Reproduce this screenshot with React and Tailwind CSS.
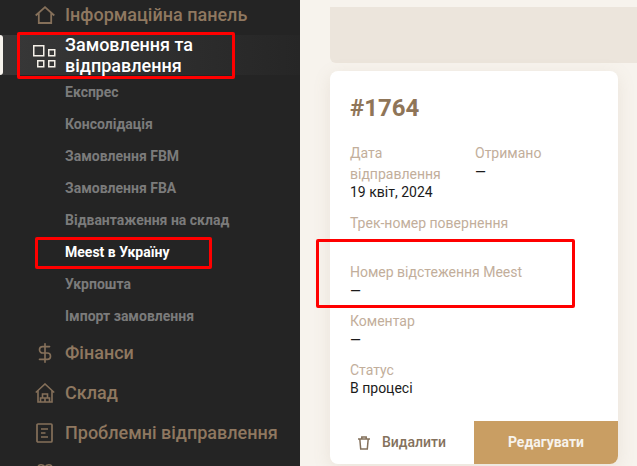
import React from "react";
import { DollarSign } from "lucide-react";

const subItems = [
  "Експрес",
  "Консолідація",
  "Замовлення FBM",
  "Замовлення FBA",
  "Відвантаження на склад",
  "Meest в Україну",
  "Укрпошта",
  "Імпорт замовлення",
];

const HomeIcon = () => (
  <svg width="20" height="18" viewBox="0 0 20 18" fill="none" stroke="#85705a" strokeWidth="1.8">
    <path d="M.7 9.500 10 1.200l9.300 8.300M3.800 7v10h12.400V7" />
  </svg>
);

const GridIcon = () => (
  <svg width="24" height="24" viewBox="0 0 24 24" fill="none" stroke="#f5f0e8" strokeWidth="1.5">
    <rect x="1.750" y="1.750" width="10" height="10" />
    <rect x="16.750" y="5.750" width="6" height="6" />
    <rect x="5.750" y="16.750" width="6" height="6" />
    <rect x="16.750" y="16.750" width="6" height="6" />
  </svg>
);

const StoreIcon = () => (
  <svg width="20" height="20" viewBox="0 0 20 20" fill="none" stroke="#85705a" strokeWidth="1.6">
    <path d="M.8 9.500 10 1l9.200 8.500M3 7.500V19h14V7.500" />
    <path d="M5.500 19v-4h9v4M10 19v-4M7.500 15v-4h5v4" />
  </svg>
);

const DocIcon = () => (
  <svg width="17" height="20" viewBox="0 0 17 20" fill="none" stroke="#85705a" strokeWidth="1.7">
    <rect x="1" y="1" width="15" height="18" rx="1" />
    <path d="M5 6h7M5 10h4.500M5 14h7" />
  </svg>
);

const HeartIcon = () => (
  <svg width="16" height="20" viewBox="0 0 16 20" fill="none" stroke="#85705a" strokeWidth="1.6">
    <path d="M8 4.500C7 1.500 1 .2 1 5c0 4 4 7 7 10 3-3 7-6 7-10 0-4.800-6-3.500-7-.500Z" />
  </svg>
);

const TrashIcon = () => (
  <svg width="12" height="14" viewBox="0 0 12 14" fill="none" stroke="#84715c" strokeWidth="1.5">
    <path d="M0 3h12M3.800 3V1h4.400v2M1.800 3l.9 10h6.600l.9-10" />
  </svg>
);

const NavRow = ({ icon, label }) => (
  <div className="flex h-10 shrink-0 items-center pl-[33px]">
    <div className="mr-[9px] flex w-[23px] shrink-0 justify-center">{icon}</div>
    {label && (
      <span className="-mt-[2px] whitespace-nowrap text-[18px] font-medium text-[#8f7860]">{label}</span>
    )}
  </div>
);

const Field = ({ label, value }) => (
  <div>
    <div className="text-[14px] leading-[21px] text-[#c2ae9b]">{label}</div>
    <div className={`-mt-px h-4 text-[14px] leading-4 text-[#1b1b1b] ${value === "—" ? "pt-px" : ""}`}>{value}</div>
  </div>
);

export default function App() {
  return (
    <div className="relative flex h-[466px] w-[637px] overflow-hidden bg-[#f7f3ed] font-['Roboto',sans-serif]">
      {/* sidebar */}
      <aside className="-mt-[5px] flex w-[300px] shrink-0 flex-col bg-[#242424]">
        <NavRow icon={<HomeIcon />} label="Інформаційна панель" />

        <div className="relative flex h-10 shrink-0 items-center bg-gradient-to-r from-[#383838] to-[#262626]">
          <div className="absolute left-0 top-0 h-full w-[3px] rounded-r-sm bg-[#f7f3ed]" />
          <div className="ml-[32px] mr-[9px] mt-[1px] shrink-0">
            <GridIcon />
          </div>
          <span className="text-[18px] font-medium leading-[21px] text-white">
            Замовлення та
            <br />
            відправлення
          </span>
        </div>

        <div className="mt-px flex shrink-0 flex-col">
          {subItems.map((item) => (
            <div
              key={item}
              className={`flex h-8 items-center pl-[65px] text-[14px] font-bold ${
                item === "Meest в Україну" ? "text-white" : "text-[#7b7b7b]"
              }`}
            >
              {item}
            </div>
          ))}
        </div>

        <div className="mt-px shrink-0">
          <NavRow icon={<DollarSign size={22} color="#85705a" strokeWidth={1.8} />} label="Фінанси" />
          <NavRow icon={<StoreIcon />} label="Склад" />
          <NavRow icon={<DocIcon />} label="Проблемні відправлення" />
          <NavRow icon={<HeartIcon />} />
        </div>
      </aside>

      {/* main */}
      <main className="flex min-w-0 flex-1 flex-col pl-[30px] pt-[7px]">
        <div className="h-14 shrink-0 rounded-bl-md bg-[#ece5dc]" />

        <section className="mr-[19px] mt-2 flex h-[393px] flex-col rounded-lg bg-white shadow-[0_4px_18px_rgba(143,120,96,0.13)]">
          <div className="px-5 pt-[21px]">
            <h1 className="mb-[19px] text-[24px] font-bold leading-8 text-[#8f7558]">#1764</h1>
            <div className="flex flex-col gap-[13px]">
              <div className="grid grid-cols-[125px_1fr]">
                <Field label={<>Дата<br />відправлення</>} value="19 квіт, 2024" />
                <Field label="Отримано" value="—" />
              </div>
              <Field label="Трек-номер повернення" value="" />
              <Field label="Номер відстеження Meest" value="—" />
              <Field label="Коментар" value="—" />
              <Field label="Статус" value="В процесі" />
            </div>
          </div>

          <div className="mt-auto flex h-[43px] overflow-hidden rounded-b-lg">
            <div className="flex flex-1 items-center gap-3 pl-[28px]">
              <TrashIcon />
              <span className="text-[14px] font-medium text-[#84715c]">Видалити</span>
            </div>
            <div className="flex w-[144px] items-center justify-center bg-[#c99e63] text-[14px] font-bold text-[#f7f3ed]">
              Редагувати
            </div>
          </div>
        </section>
      </main>

      {/* red annotation boxes */}
      <div className="absolute left-[17px] top-[32px] h-[47px] w-[218px] rounded-[2px] border-[3px] border-[#ff0000]" />
      <div className="absolute left-[35px] top-[237px] h-[32px] w-[177px] rounded-[2px] border-[3px] border-[#ff0000]" />
      <div className="absolute left-[316px] top-[239px] h-[69px] w-[259px] rounded-[2px] border-[3px] border-[#ff0000]" />
    </div>
  );
}
